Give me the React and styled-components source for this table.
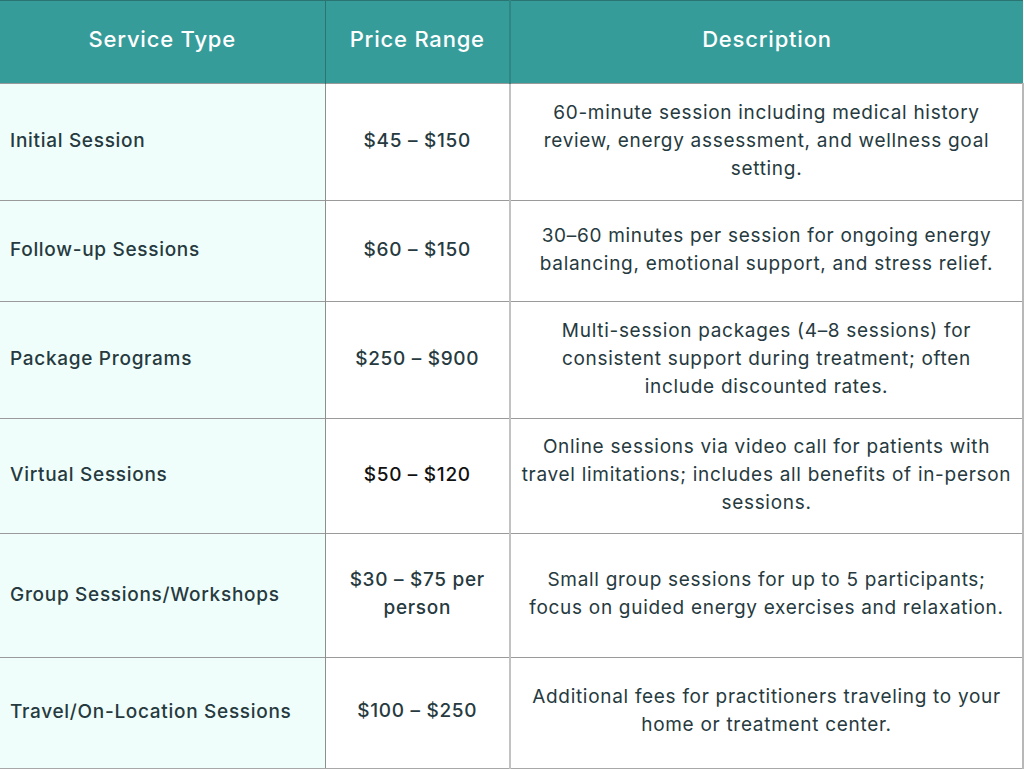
import styled, { createGlobalStyle } from "styled-components";

const Global = createGlobalStyle`
  html, body { margin: 0; padding: 0; background: #fff; }
  body { font-family: "Inter", "Noto Sans", sans-serif; }
`;

const rows = [
  { type: "Initial Session", price: "$45 – $150", h: 117, desc: ["60-minute session including medical history", "review, energy assessment, and wellness goal", "setting."] },
  { type: "Follow-up Sessions", price: "$60 – $150", h: 101, desc: ["30–60 minutes per session for ongoing energy", "balancing, emotional support, and stress relief."] },
  { type: "Package Programs", price: "$250 – $900", h: 117, desc: ["Multi-session packages (4–8 sessions) for", "consistent support during treatment; often", "include discounted rates."] },
  { type: "Virtual Sessions", price: "$50 – $120", h: 115, dark: true, desc: ["Online sessions via video call for patients with", "travel limitations; includes all benefits of in-person", "sessions."] },
  { type: "Group Sessions/Workshops", price: ["$30 – $75 per", "person"], h: 124, desc: ["Small group sessions for up to 5 participants;", "focus on guided energy exercises and relaxation."] },
  { type: "Travel/On-Location Sessions", price: "$100 – $250", h: 111, desc: ["Additional fees for practitioners traveling to your", "home or treatment center."] },
];

const Table = styled.table`
  width: 1024px;
  border-collapse: collapse;
  table-layout: fixed;
  color: #263a40;
`;

const HeadRow = styled.tr`
  height: 83px;
  background: #369c9a;
  border-top: 1px solid #2a7471;
`;

const Th = styled.th`
  color: #fff;
  font-size: 22px;
  font-weight: 500;
  letter-spacing: 0.8px;
  text-align: center;
  padding: 0 0 7px;
  border-left: ${(p) => (p.$light ? "2px solid #2f8784" : "1px solid #2a7471")};
  &:first-child { border-left: none; }
`;

const Row = styled.tr`
  border-top: 1px solid #9a9a9a;
  &:last-child { border-bottom: 2px solid #a8a8a8; }
`;

const TypeCell = styled.td`
  background: #f0fefb;
  font-size: 19px;
  font-weight: 500;
  letter-spacing: 0.7px;
  padding: 0 0 3px 10px;
  border-right: 1px solid #8e8e8e;
  white-space: nowrap;
`;

const PriceCell = styled.td`
  font-size: 19px;
  font-weight: 500;
  letter-spacing: 0.7px;
  text-align: center;
  line-height: 28px;
  color: ${(p) => (p.$dark ? "#111" : "#263a40")};
  border-right: 2px solid #c2c2c2;
  padding: 0 0 3px;
`;

const DescCell = styled.td`
  font-size: 19px;
  font-weight: 400;
  letter-spacing: 0.7px;
  text-align: center;
  line-height: 28px;
  padding: 0 2px 3px;
  border-right: 2px solid #b8b8b8;
  white-space: nowrap;
`;

const Line = styled.div``;

export default function App() {
  return (
    <>
      <Global />
      <Table>
        <colgroup>
          <col style={{ width: 325 }} />
          <col style={{ width: 185 }} />
          <col />
        </colgroup>
        <thead>
          <HeadRow>
            <Th>Service Type</Th>
            <Th>Price Range</Th>
            <Th $light>Description</Th>
          </HeadRow>
        </thead>
        <tbody>
          {rows.map((r) => (
            <Row key={r.type} style={{ height: r.h }}>
              <TypeCell>{r.type}</TypeCell>
              <PriceCell $dark={r.dark}>
                {Array.isArray(r.price) ? r.price.map((l) => <Line key={l}>{l}</Line>) : r.price}
              </PriceCell>
              <DescCell>
                {r.desc.map((l) => (
                  <Line key={l}>{l}</Line>
                ))}
              </DescCell>
            </Row>
          ))}
        </tbody>
      </Table>
    </>
  );
}
